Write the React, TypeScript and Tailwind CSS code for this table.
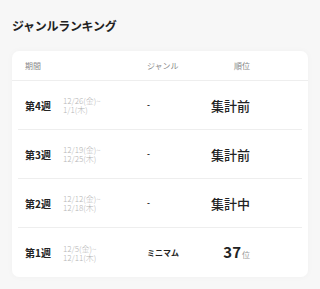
import React from "react";

const rows = [
  { week: "第4週", d1: "12/26(金)~", d2: "1/1(木)", genre: "-", rank: "集計前" },
  { week: "第3週", d1: "12/19(金)~", d2: "12/25(木)", genre: "-", rank: "集計前" },
  { week: "第2週", d1: "12/12(金)~", d2: "12/18(木)", genre: "-", rank: "集計中" },
  { week: "第1週", d1: "12/5(金)~", d2: "12/11(木)", genre: "ミニマム", rank: "37" },
];

export default function App() {
  return (
    <div
      className="w-[320px] h-[289px] bg-[#f7f7f7] px-[12px] pt-[17px]"
      style={{ fontFamily: '"Noto Sans CJK JP", "Noto Sans", sans-serif' }}
    >
      <h2 className="text-[12px] font-bold text-[#222] leading-[18px] tracking-[-0.3px]">ジャンルランキング</h2>
      <div className="mt-[16px] bg-white rounded-[7px] shadow-[0_0_6px_rgba(0,0,0,0.03)]">
        <div className="h-[30px] flex items-center border-b border-[#eeeeee] pl-[13px] text-[8px] text-[#888]">
          <div className="w-[122px]">期間</div>
          <div className="w-[63px]">ジャンル</div>
          <div className="w-[40px] text-right">順位</div>
        </div>
        {rows.map((r, i) => (
          <div
            key={i}
            className={`mx-[6px] h-[49px] flex items-center pl-[7px] ${i < rows.length - 1 ? "border-b border-[#eeeeee]" : ""}`}
          >
            <div className="w-[38px] text-[10px] font-bold text-[#222]">{r.week}</div>
            <div className="w-[84px] text-[8px] leading-[9px] font-light text-[#b5b5b5]">
              <div>{r.d1}</div>
              <div>{r.d2}</div>
            </div>
            <div className="w-[63px] text-[8px] font-bold text-[#222]">{r.genre}</div>
            <div className="w-[40px] flex justify-end items-baseline text-[#222] whitespace-nowrap">
              {r.rank === "37" ? (
                <>
                  <span className="text-[15px] font-bold leading-none">37</span>
                  <span className="text-[8px] text-[#999] ml-[1px]">位</span>
                </>
              ) : (
                <span className="text-[13px] font-medium leading-none">{r.rank}</span>
              )}
            </div>
          </div>
        ))}
      </div>
    </div>
  );
}
